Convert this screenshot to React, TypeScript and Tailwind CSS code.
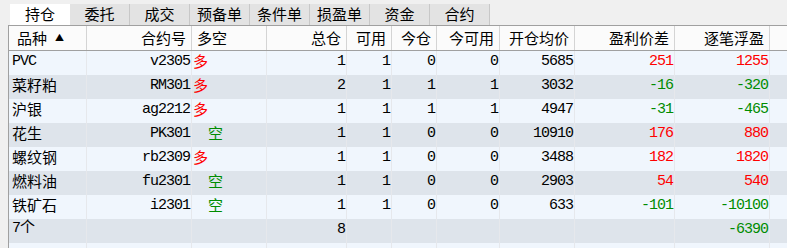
const tabs = ['持仓', '委托', '成交', '预备单', '条件单', '损盈单', '资金', '合约']

const cols = 'grid grid-cols-[78px_105px_75px_80px_45px_45px_63px_75px_100px_95px_1fr]'

const cn = "font-['Noto_Sans_CJK_SC',sans-serif] text-[15px]"
const mono = "font-['Liberation_Mono','Noto_Sans_CJK_SC',monospace] text-[15px] tracking-[-1px]"

interface Position {
  name: string
  code: string
  long: boolean
  total: number
  avail: number
  today: number
  todayAvail: number
  price: number
  diff: number
  pnl: number
}

const rows: Position[] = [
  { name: 'PVC', code: 'v2305', long: true, total: 1, avail: 1, today: 0, todayAvail: 0, price: 5685, diff: 251, pnl: 1255 },
  { name: '菜籽粕', code: 'RM301', long: true, total: 2, avail: 1, today: 1, todayAvail: 1, price: 3032, diff: -16, pnl: -320 },
  { name: '沪银', code: 'ag2212', long: true, total: 1, avail: 1, today: 1, todayAvail: 1, price: 4947, diff: -31, pnl: -465 },
  { name: '花生', code: 'PK301', long: false, total: 1, avail: 1, today: 0, todayAvail: 0, price: 10910, diff: 176, pnl: 880 },
  { name: '螺纹钢', code: 'rb2309', long: true, total: 1, avail: 1, today: 0, todayAvail: 0, price: 3488, diff: 182, pnl: 1820 },
  { name: '燃料油', code: 'fu2301', long: false, total: 1, avail: 1, today: 0, todayAvail: 0, price: 2903, diff: 54, pnl: 540 },
  { name: '铁矿石', code: 'i2301', long: false, total: 1, avail: 1, today: 0, todayAvail: 0, price: 633, diff: -101, pnl: -10100 },
]

const headers = ['总仓', '可用', '今仓', '今可用', '开仓均价', '盈利价差', '逐笔浮盈']

function Num({ value, color = 'text-black' }: { value: number | string; color?: string }) {
  return (
    <div className={`border-r border-[#e6e8ec] text-right pr-[1px] pt-[1px] leading-[20px] ${mono} ${color}`}>
      {value}
    </div>
  )
}

function pnlColor(v: number) {
  return v < 0 ? 'text-[#008c00]' : 'text-[#ff0000]'
}

export default function App() {
  return (
    <div className="w-[787px] h-[248px] bg-[#f0f0f0] overflow-hidden text-black">
      {/* Tabs */}
      <div className="flex h-[25px] items-end pl-[10px]">
        {tabs.map((t, i) => (
          <div
            key={t}
            className={`w-[60px] h-[21px] flex items-center justify-center ${cn} ${
              i === 0 ? 'bg-white' : 'bg-[#e3e3e3] border-r border-[#c8c8c8]'
            }`}
          >
            {t}
          </div>
        ))}
      </div>

      <div className="ml-[8px] border-l border-t border-[#a0a0a0]">
        {/* Header */}
        <div className={`${cols} h-[25px] bg-[#fbfbfb] border-b border-[#a0a0a0] ${cn}`}>
          <div className="flex items-center gap-[8px] pl-[8px] border-r border-[#d4d4d4]">
            品种 <span className="text-[9px]">▲</span>
          </div>
          <div className="flex items-center justify-end pr-[5px] border-r border-[#d4d4d4]">合约号</div>
          <div className="flex items-center pl-[5px] border-r border-[#d4d4d4]">多空</div>
          {headers.map((h) => (
            <div key={h} className="flex items-center justify-end pr-[5px] border-r border-[#d4d4d4]">
              {h}
            </div>
          ))}
          <div />
        </div>

        {/* Rows */}
        {rows.map((r, i) => (
          <div key={r.code} className={`${cols} h-[24px] ${i % 2 === 0 ? 'bg-[#f0f6fd]' : 'bg-[#dee4eb]'}`}>
            <div className={`border-r border-[#e6e8ec] pl-[3px] ${/[A-Z]/.test(r.name) ? `pt-[1px] leading-[20px] ${mono}` : `leading-[19px] ${cn}`}`}>
              {r.name}
            </div>
            <Num value={r.code} />
            <div className={`border-r border-[#e6e8ec] leading-[19px] ${cn} ${r.long ? 'pl-[1px] text-[#ff0000]' : 'pl-[16px] text-[#008c00]'}`}>
              {r.long ? '多' : '空'}
            </div>
            <Num value={r.total} />
            <Num value={r.avail} />
            <Num value={r.today} />
            <Num value={r.todayAvail} />
            <Num value={r.price} />
            <Num value={r.diff} color={pnlColor(r.diff)} />
            <Num value={r.pnl} color={pnlColor(r.pnl)} />
            <div />
          </div>
        ))}

        {/* Total */}
        <div className={`${cols} h-[24px] bg-[#dee4eb]`}>
          <div className={`border-r border-[#e6e8ec] pl-[3px] leading-[19px] ${mono}`}>7个</div>
          <Num value="" />
          <Num value="" />
          <Num value={8} />
          <Num value="" />
          <Num value="" />
          <Num value="" />
          <Num value="" />
          <Num value="" />
          <Num value={-6390} color="text-[#008c00]" />
          <div />
        </div>

        {/* Empty filler row */}
        <div className={`${cols} h-[24px] bg-[#f0f6fd]`}>
          {Array.from({ length: 10 }).map((_, i) => (
            <div key={i} className="border-r border-[#e6e8ec]" />
          ))}
          <div />
        </div>
      </div>
    </div>
  )
}
